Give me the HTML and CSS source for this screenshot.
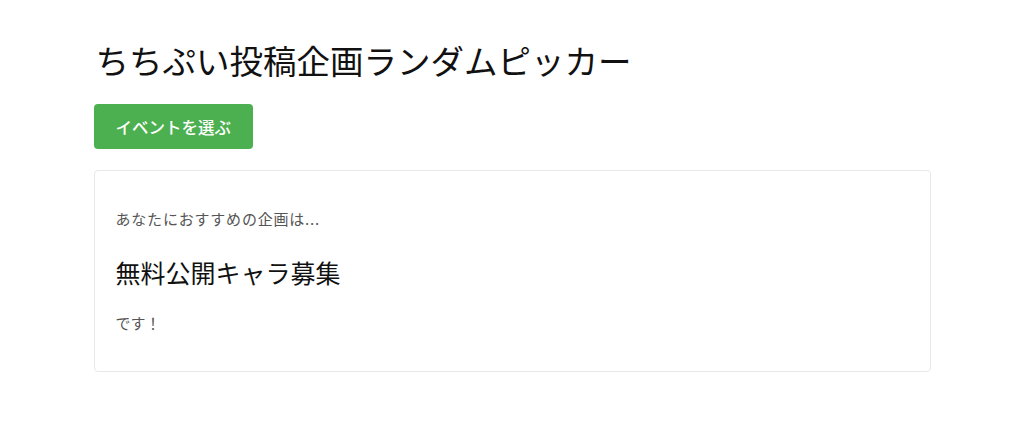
FILE: index.html
```html
<!DOCTYPE html>
<html lang="ja">
<head>
<meta charset="utf-8">
<title>ちちぷい投稿企画ランダムピッカー</title>
<link rel="stylesheet" href="styles.css">
</head>
<body>
<main class="container">
  <h1 class="title">ちちぷい投稿企画ランダムピッカー</h1>
  <button class="pick-btn" type="button">イベントを選ぶ</button>
  <section class="result-card">
    <p class="lead">あなたにおすすめの企画は...</p>
    <h2 class="event-name">無料公開キャラ募集</h2>
    <p class="tail">です！</p>
  </section>
</main>
</body>
</html>
```
FILE: styles.css
```css
html, body {
  margin: 0;
  padding: 0;
  background: #fff;
}
body {
  font-family: "Noto Sans CJK JP", "Noto Sans", sans-serif;
  color: #111;
}
.container {
  width: 837px;
  margin: 0 auto;
  padding-top: 36px;
}
.title {
  margin: 0 0 20px 2px;
  font-size: 33.5px;
  font-weight: 400;
  line-height: 48px;
  color: #111;
}
.pick-btn {
  display: block;
  height: 45px;
  padding: 0 22px;
  font-family: inherit;
  font-size: 16.5px;
  font-weight: 500;
  color: #fff;
  background: #4caf50;
  border: none;
  border-radius: 4px;
  margin-bottom: 21px;
}
.result-card {
  height: 202px;
  border: 1px solid #e8e8e8;
  border-radius: 4px;
  padding: 37px 21px 0;
  box-sizing: border-box;
}
.lead {
  margin: 0;
  font-size: 15px;
  line-height: 22px;
  letter-spacing: 0.8px;
  color: #555;
}
.event-name {
  margin: 25px 0 0;
  font-size: 25px;
  font-weight: 400;
  line-height: 34px;
  color: #111;
}
.tail {
  margin: 23px 0 0;
  font-size: 15px;
  line-height: 22px;
  color: #555;
}
```
